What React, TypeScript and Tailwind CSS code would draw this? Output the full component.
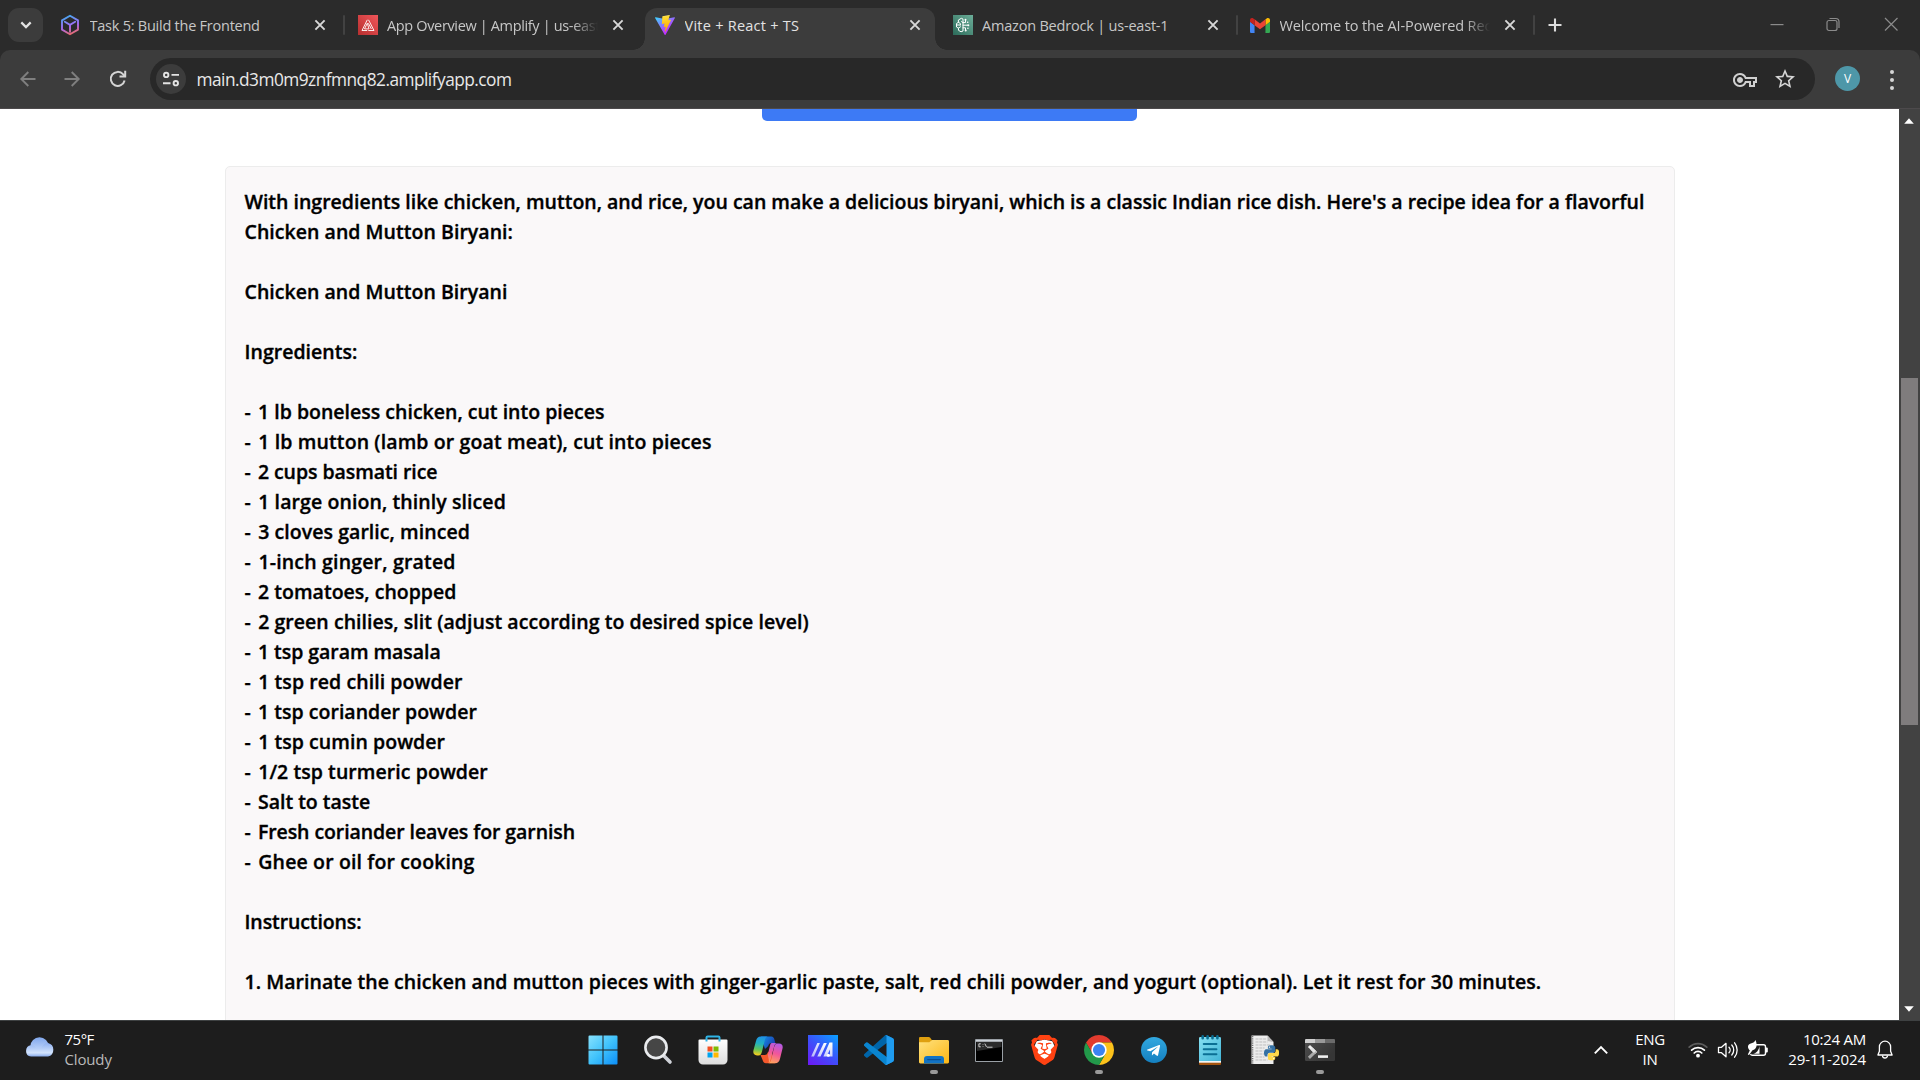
import type { ReactNode } from 'react';
import { SiBrave } from 'react-icons/si';
import { FaTelegramPlane } from 'react-icons/fa';

/* ---------- favicons ---------- */

const CubeFavicon = () => (
  <svg className="h-[24px] w-5" viewBox="0 0 20 24" fill="none">
    <defs>
      <linearGradient id="cube" x1="6" y1="0" x2="13" y2="24" gradientUnits="userSpaceOnUse">
        <stop offset="0.1" stopColor="#43a9f0" />
        <stop offset="0.55" stopColor="#a56bf5" />
        <stop offset="1" stopColor="#ff6a3d" />
      </linearGradient>
    </defs>
    <path d="M10 2.800 18 7.400v9.200l-8 4.600-8-4.600V7.400z" stroke="url(#cube)" strokeWidth="1.900" strokeLinejoin="round" />
    <path d="M4.800 8.800 10 11.900l5.200-3.100M10 11.900v7" stroke="url(#cube)" strokeWidth="1.900" strokeLinecap="round" />
  </svg>
);

const AmplifyFavicon = () => (
  <svg className="size-5" viewBox="0 0 20 20" fill="none">
    <defs>
      <linearGradient id="amp" x1="0" y1="20" x2="20" y2="0" gradientUnits="userSpaceOnUse">
        <stop stopColor="#b72f2f" />
        <stop offset="1" stopColor="#f0565a" />
      </linearGradient>
    </defs>
    <path d="M0 0h20v20H0z" fill="url(#amp)" />
    <path d="M9.300 4.800 4 15.500h5.200M9.300 8.200l-2.800 5.700h4.500zM10.500 4.800l5.500 10.700h-5.700M10.400 8.300l3 5.700" stroke="#fff" strokeWidth="0.9" />
  </svg>
);

const ViteFavicon = () => (
  <svg className="size-5" viewBox="0 0 256 257">
    <defs>
      <linearGradient id="v1" x1="-.828%" x2="57.636%" y1="7.652%" y2="78.411%">
        <stop offset="0%" stopColor="#41D1FF" />
        <stop offset="100%" stopColor="#BD34FE" />
      </linearGradient>
      <linearGradient id="v2" x1="43.376%" x2="50.316%" y1="2.242%" y2="89.03%">
        <stop offset="0%" stopColor="#FFEA83" />
        <stop offset="8.333%" stopColor="#FFDD35" />
        <stop offset="100%" stopColor="#FFA800" />
      </linearGradient>
    </defs>
    <path fill="url(#v1)" d="M255.153 37.938L134.897 252.976c-2.483 4.44-8.862 4.466-11.382.048L.875 37.958c-2.746-4.814 1.371-10.646 6.827-9.67l120.385 21.517a6.537 6.537 0 0 0 2.322-.004l117.867-21.483c5.438-.991 9.574 4.796 6.877 9.62Z" />
    <path fill="url(#v2)" d="M185.432.063L96.44 17.501a3.268 3.268 0 0 0-2.634 3.014l-5.474 92.456a3.268 3.268 0 0 0 3.997 3.378l24.777-5.718c2.318-.535 4.413 1.507 3.936 3.838l-7.361 36.047c-.495 2.426 1.782 4.5 4.151 3.78l15.304-4.649c2.372-.72 4.652 1.36 4.15 3.788l-11.698 56.621c-.732 3.542 3.979 5.473 5.943 2.437l1.313-2.028l72.516-144.72c1.215-2.423-.88-5.186-3.54-4.672l-25.505 4.922c-2.396.462-4.435-1.77-3.759-4.114l16.646-57.705c.677-2.35-1.37-4.583-3.769-4.113Z" />
  </svg>
);

const BedrockFavicon = () => (
  <svg className="size-5" viewBox="0 0 20 20" fill="none">
    <defs>
      <linearGradient id="bed" x1="0" y1="20" x2="20" y2="0" gradientUnits="userSpaceOnUse">
        <stop stopColor="#2c6b5a" />
        <stop offset="1" stopColor="#6cae99" />
      </linearGradient>
    </defs>
    <path d="M0 0h20v20H0z" fill="url(#bed)" />
    <g stroke="#fff" strokeWidth="1" strokeLinecap="round" strokeLinejoin="round">
      <path d="M10 4.500v11.500l-2 .8-2.500-1.500v-2L3.500 12V8.500L5.400 7.300V5L8 3.500z" />
      <path d="M5.500 13l2-1.200M5.400 7.300l2 1.200v1.500M3.800 10H7M10 10.200h4.500M10 7.600h2.500V5M10 12.800h2.500v2.400M10 7.600l-1.500-1" />
    </g>
    <g fill="#fff">
      <circle cx="12.500" cy="4.700" r="1" />
      <circle cx="15.300" cy="10.200" r="1" />
      <circle cx="12.700" cy="15.600" r="1" />
      <circle cx="14.700" cy="7.200" r="0.8" />
      <circle cx="14.900" cy="13.300" r="0.8" />
    </g>
  </svg>
);

const GmailFavicon = () => (
  <svg className="h-[15px] w-5" viewBox="52 42 88 66">
    <path fill="#4285f4" d="M58 108h14V74L52 59v43c0 3.320 2.690 6 6 6" />
    <path fill="#34a853" d="M120 108h14c3.320 0 6-2.690 6-6V59l-20 15" />
    <path fill="#fbbc04" d="M120 48v26l20-15v-8c0-7.420-8.470-11.650-14.400-7.200" />
    <path fill="#ea4335" d="M72 74V48l24 18 24-18v26L96 92" />
    <path fill="#c5221f" d="M52 51v8l20 15V48l-5.600-4.200c-5.940-4.450-14.400-.22-14.400 7.200" />
  </svg>
);

/* ---------- tab strip ---------- */

const CloseIcon = () => (
  <svg className="size-5 shrink-0" viewBox="0 0 20 20" stroke="currentColor" strokeWidth="1.900" fill="none">
    <path d="m5.400 5.400 9.200 9.200m0-9.200-9.200 9.200" />
  </svg>
);

type TabProps = { icon: ReactNode; title: string; tracking: string; active?: boolean; fade?: boolean; divider?: boolean };

function Tab({ icon, title, tracking, active, fade, divider }: TabProps) {
  return (
    <div className="flex w-[297.5px] shrink-0 items-start pt-2">
      <div
        className={
          'relative flex h-[42px] w-[290px] items-start pt-1.5 pl-[10px] pr-2.5 ' +
          (active ? 'rounded-t-[12px] bg-[#3c3c3c] text-[#e3e3e3]' : 'text-[#c7c7c7]')
        }
      >
        {active && (
          <>
            <span className="absolute bottom-0 -left-3 size-3 bg-[radial-gradient(circle_at_top_left,transparent_11.5px,#3c3c3c_12px)]" />
            <span className="absolute bottom-0 -right-3 size-3 bg-[radial-gradient(circle_at_top_right,transparent_11.5px,#3c3c3c_12px)]" />
          </>
        )}
        <span className="mt-px flex size-5 shrink-0 items-center justify-center">{icon}</span>
        <span
          className={
            'ml-[9.500px] h-[24px] flex-1 overflow-hidden whitespace-nowrap text-[14.5px] leading-[24px] ' +
            tracking +
            (fade ? ' [mask-image:linear-gradient(to_right,black_88%,transparent)]' : '')
          }
        >
          {title}
        </span>
        <span className="mt-px ml-2.5 text-[#d8d8d8]">
          <CloseIcon />
        </span>
      </div>
      <div className={'mt-[7px] ml-[3px] h-5 w-0.5 rounded-full ' + (divider ? 'bg-[#424242]' : '')} />
    </div>
  );
}

function TabStrip() {
  return (
    <div className="flex h-[50px] bg-[#2b2b2b]">
      <div className="w-[50px] shrink-0 pt-2 pl-2">
        <div className="flex h-[34px] w-[35px] items-center justify-center rounded-[11px] bg-[#3c3c3c]">
          <svg className="size-4" viewBox="0 0 16 16" fill="none" stroke="#e3e3e3" strokeWidth="2.200">
            <path d="m3.300 5.400 4.700 4.700 4.700-4.700" />
          </svg>
        </div>
      </div>
      <Tab icon={<CubeFavicon />} title="Task 5: Build the Frontend" tracking="tracking-[-0.24px]" divider />
      <Tab icon={<AmplifyFavicon />} title="App Overview | Amplify | us-east-1" tracking="tracking-[-0.35px]" fade />
      <Tab icon={<ViteFavicon />} title="Vite + React + TS" tracking="tracking-[0.25px]" active />
      <Tab icon={<BedrockFavicon />} title="Amazon Bedrock | us-east-1" tracking="tracking-[-0.2px]" divider />
      <Tab icon={<GmailFavicon />} title="Welcome to the AI-Powered Recipe" tracking="tracking-[-0.12px]" fade divider />
      <svg className="mt-4 ml-[8px] size-[18px]" viewBox="0 0 18 18" stroke="#dcdcdc" strokeWidth="2.100">
        <path d="M9 2.500v13M2.500 9h13" />
      </svg>
      <div className="ml-auto flex items-start pt-4 text-[#8b8b8b]">
        <svg className="mr-[40px] size-4" viewBox="0 0 16 16" stroke="currentColor" strokeWidth="1.200">
          <path d="M1.500 8.600h13" />
        </svg>
        <svg className="mr-[42px] size-4" viewBox="0 0 16 16" fill="none" stroke="currentColor" strokeWidth="1.200">
          <rect x="2" y="4.500" width="10" height="10" rx="2" />
          <path d="M4.500 2.500h6.300a3.200 3.200 0 0 1 3.200 3.200V12" />
        </svg>
        <svg className="mr-[21px] size-4" viewBox="0 0 16 16" fill="none" stroke="currentColor" strokeWidth="1.200">
          <path d="m2 2 12.500 12.500M14.500 2 2 14.500" />
        </svg>
      </div>
    </div>
  );
}

/* ---------- toolbar ---------- */

function Toolbar() {
  return (
    <div className="h-[59px] bg-[#2b2b2b]">
      <div className="flex h-full items-start rounded-t-[10px] border-b border-[#4d4a4c] bg-[#3c3c3c] pt-2">
        <div className="flex h-[42px] w-[150px] items-center pl-[17px]">
          <svg className="size-[22px]" viewBox="0 0 22 22" fill="none" stroke="#7f7f7f" strokeWidth="1.900">
            <path d="M18.500 11H4.500m6.800-7-7 7 7 7" />
          </svg>
          <svg className="ml-[22px] size-[22px]" viewBox="0 0 22 22" fill="none" stroke="#7f7f7f" strokeWidth="1.900">
            <path d="M3.500 11h14m-6.800-7 7 7-7 7" />
          </svg>
          <svg className="ml-[23.500px] size-[22px]" viewBox="0 0 22 22" fill="none" stroke="#d5d5d5" strokeWidth="2">
            <path d="M17.600 12.500A7 7 0 1 1 16 6.200l1.800 1.800" />
            <path d="M18.200 2.800V8.400h-5.700" />
          </svg>
        </div>
        <div className="flex h-[42px] w-[1665px] items-center rounded-full bg-[#282828] pr-[19px] pl-[6px]">
          <span className="flex size-[30px] items-center justify-center rounded-full bg-[#3c3c3c]">
            <svg className="size-[18px]" viewBox="0 0 18 18" fill="none" stroke="#e3e3e3" strokeWidth="1.900">
              <circle cx="4.200" cy="4.900" r="2.200" />
              <path d="M9.500 4.900H17M1 13.200h7.500" />
              <circle cx="13.800" cy="13.200" r="2.200" />
            </svg>
          </span>
          <span className="mt-px ml-[10.500px] text-[17.300px] tracking-[-0.52px] text-[#e8e8e8]">main.d3m0m9znfmnq82.amplifyapp.com</span>
          <svg className="mt-0.5 ml-auto size-6" viewBox="0 0 24 24" fill="#d0d0d0">
            <path d="M22 19h-6v-4h-2.680c-1.140 2.420-3.600 4-6.320 4-3.860 0-7-3.140-7-7s3.140-7 7-7c2.720 0 5.170 1.580 6.320 4H24v6h-2v4zm-4-2h2v-4h2v-2H11.940l-.23-.67C11.010 8.340 9.110 7 7 7c-2.760 0-5 2.240-5 5s2.240 5 5 5c2.110 0 4.010-1.340 4.710-3.330l.23-.67H18v4zM7 15c-1.650 0-3-1.350-3-3s1.350-3 3-3 3 1.350 3 3-1.350 3-3 3z" />
          </svg>
          <svg className="ml-[17px] size-[22px]" viewBox="1 1 22 22" fill="#d5d5d5">
            <path d="m22 9.240-7.190-.62L12 2 9.190 8.630 2 9.240l5.460 4.730L5.820 21 12 17.270 18.180 21l-1.630-7.030L22 9.240zM12 15.400l-3.760 2.270 1-4.280-3.320-2.880 4.380-.38L12 6.100l1.710 4.040 4.380.38-3.320 2.880 1 4.280L12 15.400z" />
          </svg>
        </div>
        <span className="mt-2 ml-5 flex size-[25px] items-center justify-center rounded-full bg-[#4e97a8] text-xs text-white">V</span>
        <div className="mt-[12px] ml-[30px] flex flex-col gap-[4px]">
          <i className="size-1 rounded-full bg-[#d5d5d5]" />
          <i className="size-1 rounded-full bg-[#d5d5d5]" />
          <i className="size-1 rounded-full bg-[#d5d5d5]" />
        </div>
      </div>
    </div>
  );
}

/* ---------- page ---------- */

const ingredients = [
  { text: '1 lb boneless chicken, cut into pieces', tracking: 'tracking-[0.005px]' },
  { text: '1 lb mutton (lamb or goat meat), cut into pieces', tracking: 'tracking-[0.12px]' },
  { text: '2 cups basmati rice', tracking: 'tracking-[-0.065px]' },
  { text: '1 large onion, thinly sliced', tracking: 'tracking-[0.09px]' },
  { text: '3 cloves garlic, minced', tracking: 'tracking-[0.06px]' },
  { text: '1-inch ginger, grated', tracking: 'tracking-[0.18px]' },
  { text: '2 tomatoes, chopped', tracking: 'tracking-[0.015px]' },
  { text: '2 green chilies, slit (adjust according to desired spice level)', tracking: 'tracking-[0.05px]' },
  { text: '1 tsp garam masala', tracking: 'tracking-[-0.05px]' },
  { text: '1 tsp red chili powder', tracking: 'tracking-[0.075px]' },
  { text: '1 tsp coriander powder', tracking: 'tracking-[0.02px]' },
  { text: '1 tsp cumin powder', tracking: 'tracking-[0.055px]' },
  { text: '1/2 tsp turmeric powder', tracking: 'tracking-[0.07px]' },
  { text: 'Salt to taste', tracking: 'tracking-[-0.02px]' },
  { text: 'Fresh coriander leaves for garnish', tracking: 'tracking-[-0.08px]' },
  { text: 'Ghee or oil for cooking', tracking: 'tracking-[0.14px]' },
];

function RecipeCard() {
  return (
    <div className="mx-auto mt-[45px] h-[900px] w-[1450px] rounded-[5px] border border-[#ececec] bg-[#faf8f9] px-[19px] pt-[20px] text-[19.500px] leading-[30px] font-semibold whitespace-nowrap text-black [-webkit-text-stroke:0.35px_#000]">
      <p>
        With ingredients like chicken, mutton, and rice, you can make a delicious biryani, which is a classic Indian rice dish. Here's a recipe idea for a flavorful
      </p>
      <p className="tracking-[0.04px]">Chicken and Mutton Biryani:</p>
      <p className="mt-[30px] tracking-[0.035px]">Chicken and Mutton Biryani</p>
      <p className="mt-[30px] tracking-[0.02px]">Ingredients:</p>
      <div className="mt-[30px]">
        {ingredients.map(({ text, tracking }) => (
          <p key={text} className={tracking}>
            <span className="mr-[2.200px]">- </span>
            {text}
          </p>
        ))}
      </div>
      <p className="mt-[30px] tracking-[-0.1px]">Instructions:</p>
      <p className="mt-[30px] tracking-[0.05px]">
        1. Marinate the chicken and mutton pieces with ginger-garlic paste, salt, red chili powder, and yogurt (optional). Let it rest for 30 minutes.
      </p>
    </div>
  );
}

function Scrollbar() {
  return (
    <div className="flex w-[21px] shrink-0 flex-col items-center bg-[#424242]">
      <svg className="mt-[9px] mr-px h-1.5 w-2.5" viewBox="0 0 10 6" fill="#fff">
        <path d="M5 .3 9.800 5.700H.2z" />
      </svg>
      <div className="mt-[254px] h-[347px] w-[17px] bg-[#7f7c7d]" />
      <svg className="mt-auto mr-px mb-[8px] h-1.5 w-2.5" viewBox="0 0 10 6" fill="#fff">
        <path d="M5 5.700 9.800.3H.2z" />
      </svg>
    </div>
  );
}

/* ---------- taskbar ---------- */

const StartIcon = () => (
  <svg className="size-[30px]" viewBox="0 0 30 30">
    <defs>
      <linearGradient id="win" x1="0" y1="0" x2="30" y2="30" gradientUnits="userSpaceOnUse">
        <stop stopColor="#8ae3fd" />
        <stop offset="0.5" stopColor="#40c2fb" />
        <stop offset="1" stopColor="#0a8cf8" />
      </linearGradient>
    </defs>
    <path d="M1.500.5H14.500v14H.5V1.500a1 1 0 0 1 1-1zM15.500.5h13a1 1 0 0 1 1 1v13h-14zM.5 15.500h14v14h-13a1 1 0 0 1-1-1zM15.500 15.500h14v13a1 1 0 0 1-1 1h-13z" fill="url(#win)" />
  </svg>
);

const SearchIcon = () => (
  <svg className="size-[30px]" viewBox="0 0 30 30" fill="none">
    <path d="m20.500 20.500 6.500 6.500" stroke="#cfd2d8" strokeWidth="3.600" strokeLinecap="round" />
    <circle cx="13" cy="12.500" r="10.600" fill="#464646" stroke="#e9ebee" strokeWidth="2.600" />
  </svg>
);

const StoreIcon = () => (
  <svg className="size-[30px]" viewBox="0 0 30 30">
    <defs>
      <linearGradient id="bag" x1="0" y1="4" x2="0" y2="30" gradientUnits="userSpaceOnUse">
        <stop stopColor="#fff" />
        <stop offset="1" stopColor="#dcdcdc" />
      </linearGradient>
    </defs>
    <path d="M.5 5.500a1 1 0 0 1 1-1h27a1 1 0 0 1 1 1V25a4.500 4.500 0 0 1-4.500 4.500H5A4.500 4.500 0 0 1 .5 25z" fill="url(#bag)" />
    <path d="M8.500 6.500V2.600a1.200 1.200 0 0 1 1.200-1.200h10.600a1.200 1.200 0 0 1 1.200 1.200v3.900" fill="none" stroke="#2fb4e6" strokeWidth="2" />
    <path d="M9.500 11.500h5v5h-5z" fill="#f25022" />
    <path d="M15.500 11.500h5v5h-5z" fill="#7fba00" />
    <path d="M9.500 17.500h5v5h-5z" fill="#00a4ef" />
    <path d="M15.500 17.500h5v5h-5z" fill="#ffb900" />
  </svg>
);

const CopilotIcon = () => (
  <svg className="size-[30px]" viewBox="0 0 30 30">
    <defs>
      <linearGradient id="co1" x1="8" y1="1" x2="5" y2="20" gradientUnits="userSpaceOnUse">
        <stop stopColor="#1f8fe8" />
        <stop offset="0.4" stopColor="#22b0c0" />
        <stop offset="0.7" stopColor="#5cc35c" />
        <stop offset="1" stopColor="#f2cc1f" />
      </linearGradient>
      <linearGradient id="co2" x1="25" y1="8" x2="18" y2="28" gradientUnits="userSpaceOnUse">
        <stop stopColor="#b05be8" />
        <stop offset="0.5" stopColor="#f2559a" />
        <stop offset="1" stopColor="#ffa45c" />
      </linearGradient>
      <linearGradient id="co3" x1="12" y1="2" x2="22" y2="8" gradientUnits="userSpaceOnUse">
        <stop stopColor="#1583e0" />
        <stop offset="1" stopColor="#1b3fae" />
      </linearGradient>
    </defs>
    <path d="M8 1.500h10.300c2 0 2.600 1.400 3.100 3L22.300 8h-3.500c-2.200 0-3 1-3.600 3L12 14z" fill="url(#co3)" />
    <path d="M7.500 20h4.200c1.500 0 2.500-.8 3-2.500L18 15l4 13.200H12.900c-2 0-2.800-1.400-3.300-3.200z" fill="#f4582c" />
    <path d="M7.800 1.500h6.700c-1.600.4-2.200 1.900-2.800 3.900L9 16.500c-.7 2.700-1.500 3.900-3.500 3.900H4C.8 20.400-.3 18 .6 14.800L3 6C3.800 3.200 5 1.500 7.800 1.500z" fill="url(#co1)" />
    <path d="M22.200 28.200h-6.700c1.600-.4 2.200-1.900 2.800-3.900L21 12.400c.7-2.700 1.500-3.900 3.500-3.900H26c3.200 0 4.300 2.400 3.400 5.600L27 23.700c-.8 2.800-2 4.500-4.800 4.500z" fill="url(#co2)" />
    <path d="M18.800 8h5.700c-2 0-2.800 1.200-3.500 3.900l-3.300 12.400c-.5 2-1 3.300-2.200 3.900 1.200-2.200-.2-5-.7-8.200l2.200-9.500c.4-1.600.8-2.300 1.800-2.500z" fill="url(#co2)" />
  </svg>
);

const AsusIcon = () => (
  <svg className="size-[30px]" viewBox="0 0 30 30">
    <defs>
      <linearGradient id="asus" x1="3" y1="30" x2="27" y2="0" gradientUnits="userSpaceOnUse">
        <stop stopColor="#6a1cf5" />
        <stop offset="0.500" stopColor="#3d50fb" />
        <stop offset="1" stopColor="#0c9bff" />
      </linearGradient>
      <linearGradient id="slash" x1="0" y1="8" x2="0" y2="22" gradientUnits="userSpaceOnUse">
        <stop stopColor="#fff" />
        <stop offset="1" stopColor="#c9cffb" />
      </linearGradient>
    </defs>
    <path d="M0 0h30v30H0z" fill="url(#asus)" />
    <path d="M9.300 8h2.600L6 21.500H3.200z" fill="url(#slash)" opacity="0.85" />
    <path d="M15.800 8h3l-6.300 13.500H9.300z" fill="url(#slash)" />
    <path d="M21.500 7.500h3v14h-6.500v-2h4v-5l-3.600 7h-3z" fill="url(#slash)" />
    <circle cx="20.300" cy="20.300" r="1.500" fill="#fff" />
  </svg>
);

const VsCodeIcon = () => (
  <svg className="size-[30px]" viewBox="0 0 100 100">
    <path d="M96.500 10.800 75.900.9a6.200 6.200 0 0 0-7.100 1.200L1.300 63.600a4.200 4.200 0 0 0 0 6.200l5.500 5a4.200 4.200 0 0 0 5.300.2L93.400 13.400c2.700-2.100 6.600-.1 6.600 3.300v-.3a6.300 6.300 0 0 0-3.500-5.600z" fill="#0065a9" />
    <path d="m96.500 89.200-20.600 9.900a6.200 6.200 0 0 1-7.100-1.200L1.300 36.400a4.200 4.200 0 0 1 0-6.200l5.500-5a4.200 4.200 0 0 1 5.300-.2l81.300 61.600c2.700 2.100 6.600.1 6.600-3.300v.3a6.300 6.300 0 0 1-3.500 5.600z" fill="#0a85d0" />
    <path d="M75.900 99.100a6.200 6.200 0 0 1-7.100-1.200c2.300 2.300 6.200.7 6.200-2.600V4.700c0-3.300-3.900-4.900-6.200-2.600A6.200 6.200 0 0 1 75.900.9l20.600 9.900a6.300 6.300 0 0 1 3.500 5.600v67.200a6.300 6.300 0 0 1-3.500 5.600z" fill="#1f9cf0" />
  </svg>
);

const ExplorerIcon = () => (
  <svg className="size-[30px]" viewBox="0 0 30 30">
    <defs>
      <linearGradient id="fold" x1="4" y1="4" x2="24" y2="30" gradientUnits="userSpaceOnUse">
        <stop stopColor="#ffe07a" />
        <stop offset="1" stopColor="#fcb91b" />
      </linearGradient>
    </defs>
    <path d="M0 3.300C0 2.500.6 2 1.400 2h8.200c.6 0 1 .2 1.400.6L13.500 6 8 10H0z" fill="#dfa010" />
    <path d="M0 7.300h10.300L13.200 5H28.600c.8 0 1.400.6 1.400 1.400v20.700c0 .8-.6 1.400-1.400 1.400H1.400c-.8 0-1.400-.6-1.400-1.400z" fill="url(#fold)" />
    <path d="M5 28.500v-4.500A3 3 0 0 1 8 21h14a3 3 0 0 1 3 3v4.500z" fill="#1273c4" />
    <path d="M8.700 24.600h12.600" stroke="#0b4f92" strokeWidth="1.200" strokeLinecap="round" />
  </svg>
);

const CmdIcon = () => (
  <svg className="h-[23px] w-7" viewBox="0 0 28 23">
    <path d="M.5.500h27v22H.5z" fill="#000" stroke="#9aa0a6" />
    <path d="M1 1h26v1.800H1z" fill="#cdd2d8" />
    <path d="M1.500 3h25v5L2 12z" fill="#2b2b2b" />
    <path d="M5.800 4.800H3.900v3h1.900M8 5.300v.6m0 1.300v.6M9.800 4.600l1.700 3.300M12 8.200h5.500" stroke="#e0e0e0" strokeWidth="0.9" fill="none" />
  </svg>
);

const BraveIcon = () => (
  <svg className="h-[30px] w-[27px]" viewBox="1.700 0 20.600 24" preserveAspectRatio="none">
    <path d="M12 3.500l6 1.500 1.500 3.500-2 8L12 21l-5.500-4.500-2-8L6 5z" fill="#fff" />
    <SiBrave x="0" y="0" size={24} color="#ff4212" />
  </svg>
);

const ChromeIcon = () => (
  <svg className="size-[30px]" viewBox="0 0 48 48">
    <path d="M3.220 12A24 24 0 0 1 44.780 12H24L13.600 30z" fill="#e23b2e" />
    <path d="M44.780 12A24 24 0 0 1 24 48l10.400-18L24 12z" fill="#fcc21b" />
    <path d="M24 48A24 24 0 0 1 3.220 12L13.600 30h20.800z" fill="#22994a" />
    <circle cx="24" cy="24" r="12.300" fill="#fff" />
    <circle cx="24" cy="24" r="9.700" fill="#3b83f2" />
  </svg>
);

const TelegramIcon = () => (
  <span className="flex size-[26px] items-center justify-center rounded-full bg-linear-to-b from-[#31a8e0] to-[#1480c0] text-white">
    <FaTelegramPlane className="mr-0.5 size-[15px]" />
  </span>
);

const NotepadIcon = () => (
  <svg className="h-[30px] w-[22px]" viewBox="0 0 22 30">
    <defs>
      <linearGradient id="note" x1="0" y1="2" x2="22" y2="26" gradientUnits="userSpaceOnUse">
        <stop stopColor="#86e0f2" />
        <stop offset="1" stopColor="#41b4d6" />
      </linearGradient>
    </defs>
    <path d="M0 26h22v3a1 1 0 0 1-1 1H1a1 1 0 0 1-1-1z" fill="#a4540f" />
    <path d="M0 25h22v2.700H0z" fill="#f4f4f4" />
    <path d="M0 3.200A1.200 1.200 0 0 1 1.200 2h19.600A1.200 1.200 0 0 1 22 3.200V26H0z" fill="url(#note)" />
    <path d="M4.700 9h12.800M4.700 14.200h12.800M4.700 19.200h12.800" stroke="#0b6f94" strokeWidth="1.900" strokeLinecap="round" />
    <path d="M3.700 1.400v1.800M8.600 1.400v1.800M13.500 1.400v1.800M18.400 1.400v1.800" stroke="#0b6f94" strokeWidth="2.600" strokeLinecap="round" />
  </svg>
);

const PythonFileIcon = () => (
  <svg className="h-[30px] w-7" viewBox="0 0 28 30">
    <path d="M.5.500h16l6 6.500v22H.5z" fill="#ececec" />
    <path d="M1.500 1v28" stroke="#6f6f6f" strokeWidth="1.600" strokeDasharray="1.200 1" />
    <path d="M4.500 4h11M4.500 7h12M4.500 10h15M4.500 13h9M4.500 16h8M4.500 19h9M4.500 22h9M4.500 25h12" stroke="#bdbdbd" strokeWidth="1" strokeDasharray="3 .8" />
    <path d="M16.500.5 22.500 7l-6-1z" fill="#b9b9b9" />
    <svg x="13" y="10" width="15" height="15.500" viewBox="0 0 110 110">
      <path fill="#3571a3" d="M54.900.1c-4.600 0-9 .4-12.800 1.100C30.800 3.200 28.700 7.400 28.700 15.100v10.200h26.800v3.400H18.600c-7.800 0-14.600 4.700-16.700 13.600-2.500 10.200-2.600 16.600 0 27.200 1.900 7.900 6.400 13.600 14.200 13.600h9.200V70.900c0-8.800 7.700-16.700 16.800-16.700h26.700c7.500 0 13.400-6.100 13.400-13.600V15.100c0-7.300-6.100-12.700-13.400-13.900C64.200.4 59.500.1 54.900.1z" />
      <path fill="#ffd84a" d="M85.600 28.700v11.900c0 9.200-7.800 17-16.800 17H42.100c-7.300 0-13.400 6.200-13.400 13.500v25.500c0 7.200 6.300 11.500 13.400 13.600 8.500 2.500 16.600 2.900 26.700 0 6.700-2 13.400-5.900 13.400-13.600V86.500H55.500v-3.400h40.100c7.800 0 10.700-5.400 13.400-13.600 2.800-8.400 2.700-16.400 0-27.200-1.900-7.700-5.600-13.600-13.400-13.600z" />
      <circle cx="40" cy="14" r="5" fill="#fff" />
      <circle cx="71" cy="98" r="5" fill="#fff" />
    </svg>
  </svg>
);

const TerminalIcon = () => (
  <svg className="h-[22px] w-[30px]" viewBox="0 0 30 22">
    <defs>
      <linearGradient id="term" x1="0" y1="4" x2="20" y2="22" gradientUnits="userSpaceOnUse">
        <stop stopColor="#4d4d4d" />
        <stop offset="1" stopColor="#363636" />
      </linearGradient>
      <clipPath id="termClip">
        <rect width="30" height="22" rx="1.300" />
      </clipPath>
    </defs>
    <g clipPath="url(#termClip)">
      <path d="M0 0h30v22H0z" fill="url(#term)" />
      <path d="M0 0h10v4H0z" fill="#cfcfcf" />
      <path d="M10 0h10v4H10z" fill="#999" />
      <path d="M20 0h10v4H20z" fill="#6b6b6b" />
    </g>
    <path d="m5 8 5 5" stroke="#f0f0f0" strokeWidth="3" strokeLinecap="square" />
    <path d="m10 13-5 4.800" stroke="#a9a9a9" strokeWidth="3" strokeLinecap="square" />
    <path d="m6.500 9.500 3.500 3.500" stroke="#e2e2e2" strokeWidth="3" />
    <path d="M13 17.600h10" stroke="#f0f0f0" strokeWidth="2.600" />
  </svg>
);

const pinned: { id: string; icon: ReactNode; running?: boolean }[] = [
  { id: 'start', icon: <StartIcon /> },
  { id: 'search', icon: <SearchIcon /> },
  { id: 'store', icon: <StoreIcon /> },
  { id: 'copilot', icon: <CopilotIcon /> },
  { id: 'myasus', icon: <AsusIcon /> },
  { id: 'vscode', icon: <VsCodeIcon /> },
  { id: 'explorer', icon: <ExplorerIcon />, running: true },
  { id: 'cmd', icon: <CmdIcon /> },
  { id: 'brave', icon: <BraveIcon /> },
  { id: 'chrome', icon: <ChromeIcon />, running: true },
  { id: 'telegram', icon: <TelegramIcon /> },
  { id: 'notepad', icon: <NotepadIcon /> },
  { id: 'idle', icon: <PythonFileIcon /> },
  { id: 'terminal', icon: <TerminalIcon />, running: true },
];

function Taskbar() {
  return (
    <div className="flex h-[60px] border-t border-[#3e4142] bg-[#1d1d1d] text-[15px] leading-5 text-white">
      <div className="flex w-[575px] shrink-0 pl-[25px]">
        <svg className="mt-[16px] h-5 w-[30px]" viewBox="0 0 30 20">
          <defs>
            <linearGradient id="cl1" x1="0" y1="0" x2="0" y2="14" gradientUnits="userSpaceOnUse">
              <stop stopColor="#7fa6ec" />
              <stop offset="1" stopColor="#c3d8fa" />
            </linearGradient>
            <linearGradient id="cl2" x1="0" y1="6" x2="0" y2="20" gradientUnits="userSpaceOnUse">
              <stop stopColor="#8fb1f0" />
              <stop offset="0.700" stopColor="#d3e4fd" />
              <stop offset="1" stopColor="#7fa4ea" />
            </linearGradient>
          </defs>
          <circle cx="14.500" cy="9.500" r="9.200" fill="url(#cl1)" />
          <path d="M6 8.300c3 0 4.500 1.500 5.500 3.200h5C17 8 20 6 23 6a7 7 0 0 1 0 13.600H6A5.700 5.700 0 0 1 6 8.300z" fill="url(#cl2)" />
        </svg>
        <div className="mt-[8px] ml-[9.500px]">
          <p className="tracking-[-0.5px]">75°F</p>
          <p className="tracking-[-0.15px] text-[#b9b9b9]">Cloudy</p>
        </div>
      </div>
      {pinned.map((app) => (
        <div key={app.id} className="relative flex w-[55.200px] shrink-0 items-center justify-center pb-px">
          {app.icon}
          {app.running && <i className="absolute bottom-[6px] left-1/2 h-1 w-2 -translate-x-1/2 rounded-full bg-[#9a9a9a]" />}
        </div>
      ))}
      <div className="ml-auto flex pr-[27px]">
        <svg className="mt-[21px] mr-[-1px] size-4" viewBox="0 0 16 16" fill="none" stroke="#fff" strokeWidth="1.900">
          <path d="m1.800 11.300 6.200-6.200 6.200 6.200" />
        </svg>
        <div className="mt-[8px] ml-[20px] w-[44px] text-center tracking-[-0.3px]">
          <p>ENG</p>
          <p>IN</p>
        </div>
        <svg className="mt-[20px] ml-[15.500px] h-[18px] w-5" viewBox="0 0 20 18" fill="none" strokeWidth="1.700" strokeLinecap="round">
          <path d="M1.200 6.200a12.500 12.500 0 0 1 17.600 0" stroke="#5c5c5c" />
          <path d="M3.600 9.200a9.100 9.100 0 0 1 12.800 0M6.200 12a5.400 5.400 0 0 1 7.600 0" stroke="#fff" />
          <circle cx="10" cy="14.700" r="1.900" fill="#fff" />
        </svg>
        <svg className="mt-[20px] ml-[9px] h-[18px] w-[22px]" viewBox="0 0 22 18" fill="none" stroke="#fff" strokeWidth="1.300" strokeLinecap="round" strokeLinejoin="round">
          <path d="M1.500 6.300v5.400h3l4.500 4V2.300l-4.500 4z" />
          <path d="M12 6.200a4 4 0 0 1 0 5.600M14.800 4a7.500 7.500 0 0 1 0 10M17.600 1.800a11.500 11.500 0 0 1 0 14.400" />
        </svg>
        <svg className="mt-[19px] ml-[8px] h-[18px] w-[22px]" viewBox="0 0 22 18">
          <path d="M9 4.700h7.500a2 2 0 0 1 2 2v6.600a2 2 0 0 1-2 2H5.500a2 2 0 0 1-2-1.300" fill="none" stroke="#fff" strokeWidth="1.400" />
          <path d="M18.800 7.500h1a1 1 0 0 1 1 1v3a1 1 0 0 1-1 1h-1z" fill="#fff" />
          <path d="M12.500 6v7.700H6.200c3-.5 5.600-3 6.300-7.700z" fill="#fff" />
          <path d="M8.500 0c2 4.500 1.500 9.500-3 10.200L2 15l-1.200-.6 2-4C-.5 7 1 4 4.500 3.300 6.500 2.900 7.500 1.800 8.500 0z" fill="#fff" />
        </svg>
        <div className="mt-[8px] ml-[17.500px] w-[80px] text-right">
          <p className="tracking-[-0.250px]">10:24 AM</p>
          <p className="tracking-[-0.05px]">29-11-2024</p>
        </div>
        <svg className="mt-[19px] ml-[11px] h-5 w-4" viewBox="0 0 16 20" fill="none" stroke="#fff" strokeWidth="1.300" strokeLinejoin="round">
          <path d="M8 1.200a5.600 5.600 0 0 0-5.600 5.600v4.400L.9 15h14.200l-1.500-3.800V6.800A5.600 5.600 0 0 0 8 1.200z" />
          <path d="M5.500 15.500a2.500 2.500 0 0 0 5 0" />
        </svg>
      </div>
    </div>
  );
}

export default function App() {
  return (
    <div className="flex h-[1080px] w-[1920px] flex-col overflow-hidden bg-white font-['Open_Sans','Noto_Sans',sans-serif]">
      <TabStrip />
      <Toolbar />
      <div className="flex h-[911px] overflow-hidden">
        <div className="h-full flex-1 overflow-hidden bg-white">
          <div className="mx-auto h-3 w-[375px] rounded-b-[5px] bg-[#3d7af5]" />
          <RecipeCard />
        </div>
        <Scrollbar />
      </div>
      <Taskbar />
    </div>
  );
}
